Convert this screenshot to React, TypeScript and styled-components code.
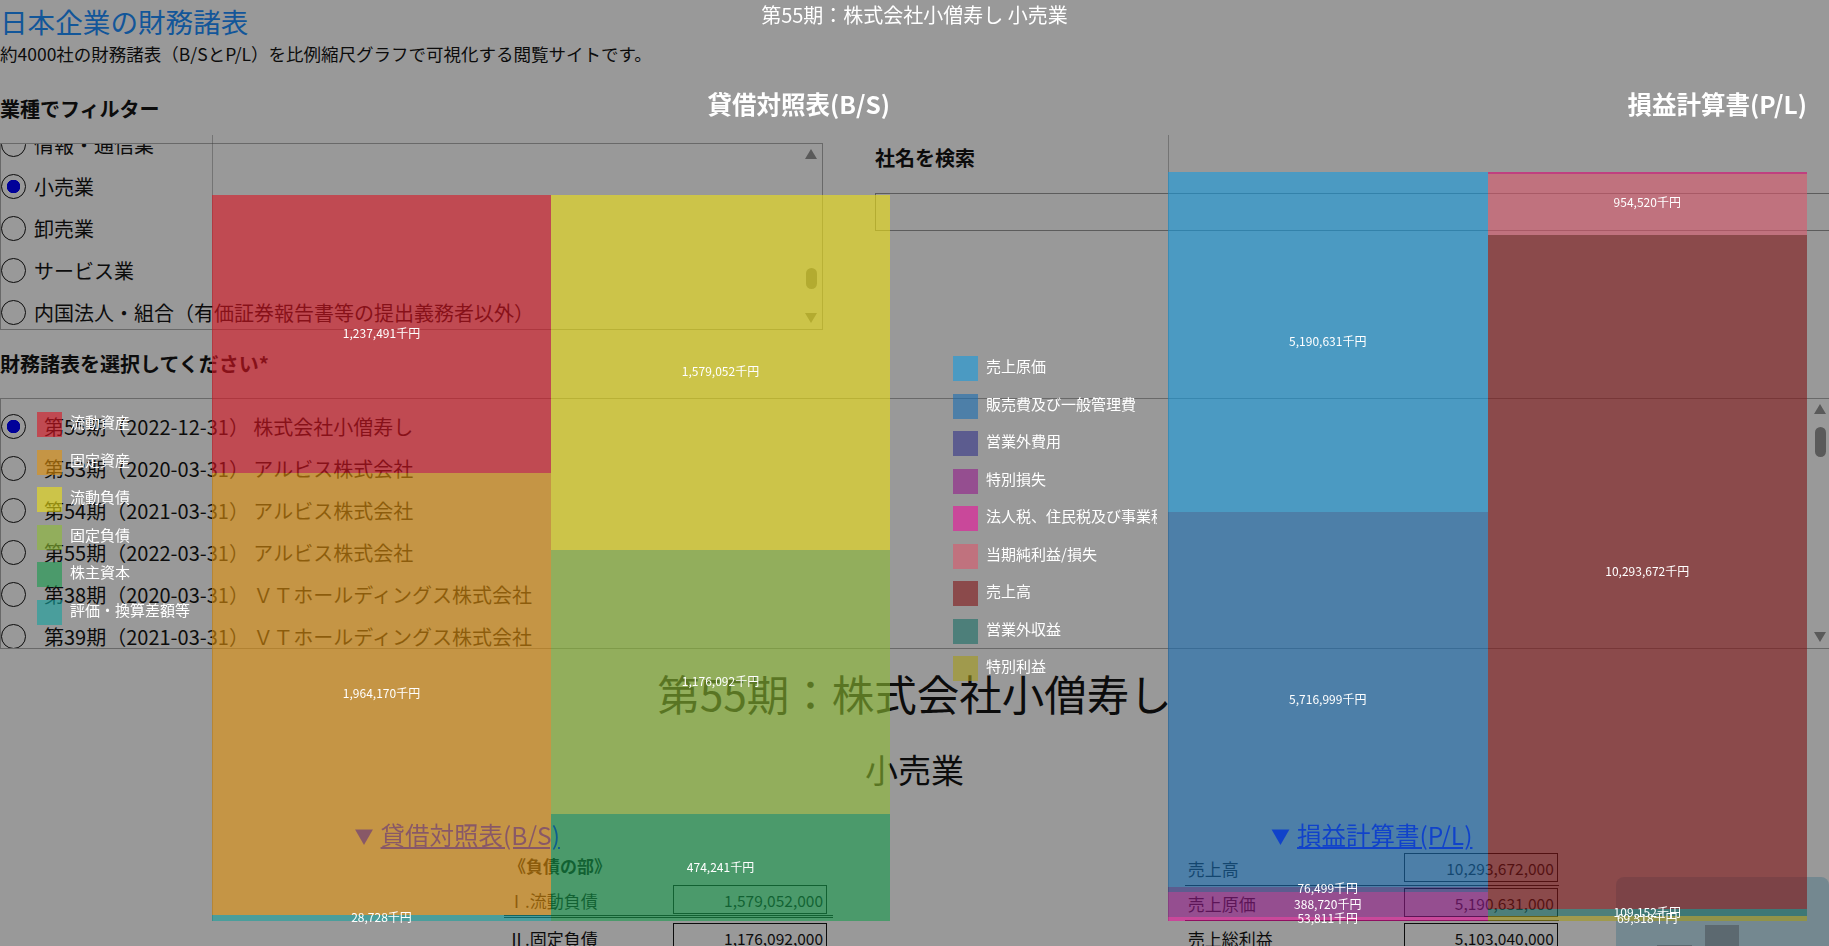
import styled, { createGlobalStyle } from "styled-components";

interface ISegment {
  value: number;
  color: string;
}

const BS_SCALE = 726 / 3229385;
const PL_SCALE = 749 / 11426662;

const COLORS = {
  currentAssets: "rgba(218, 21, 35, 0.6)",
  fixedAssets: "rgba(226, 146, 13, 0.6)",
  currentLiab: "rgba(238, 225, 20, 0.6)",
  fixedLiab: "rgba(141, 188, 51, 0.6)",
  capital: "rgba(23, 155, 76, 0.6)",
  valuation: "rgba(21, 161, 158, 0.6)",
  cost: "rgba(23, 155, 221, 0.6)",
  sga: "rgba(26, 110, 178, 0.6)",
  nonOpExpense: "rgba(51, 51, 136, 0.6)",
  specialLoss: "rgba(146, 28, 138, 0.6)",
  tax: "rgba(233, 18, 155, 0.6)",
  netIncome: "rgba(218, 88, 108, 0.6)",
  sales: "rgba(130, 21, 23, 0.6)",
  nonOpIncome: "rgba(26, 110, 101, 0.6)",
  specialIncome: "rgba(165, 155, 26, 0.6)",
};

const bsLeft: ISegment[] = [
  { value: 1237491, color: COLORS.currentAssets },
  { value: 1964170, color: COLORS.fixedAssets },
  { value: 28728, color: COLORS.valuation },
];
const bsRight: ISegment[] = [
  { value: 1579052, color: COLORS.currentLiab },
  { value: 1176092, color: COLORS.fixedLiab },
  { value: 474241, color: COLORS.capital },
];
const plLeft: ISegment[] = [
  { value: 5190631, color: COLORS.cost },
  { value: 5716999, color: COLORS.sga },
  { value: 76499, color: COLORS.nonOpExpense },
  { value: 388720, color: COLORS.specialLoss },
  { value: 53811, color: COLORS.tax },
];
const plRight: ISegment[] = [
  { value: 954520, color: COLORS.netIncome },
  { value: 10293672, color: COLORS.sales },
  { value: 109152, color: COLORS.nonOpIncome },
  { value: 69318, color: COLORS.specialIncome },
];

const bsLegend = [
  { name: "流動資産", color: COLORS.currentAssets },
  { name: "固定資産", color: COLORS.fixedAssets },
  { name: "流動負債", color: COLORS.currentLiab },
  { name: "固定負債", color: COLORS.fixedLiab },
  { name: "株主資本", color: COLORS.capital },
  { name: "評価・換算差額等", color: COLORS.valuation },
];
const plLegend = [
  { name: "売上原価", color: COLORS.cost },
  { name: "販売費及び一般管理費", color: COLORS.sga },
  { name: "営業外費用", color: COLORS.nonOpExpense },
  { name: "特別損失", color: COLORS.specialLoss },
  { name: "法人税、住民税及び事業税", color: COLORS.tax },
  { name: "当期純利益/損失", color: COLORS.netIncome },
  { name: "売上高", color: COLORS.sales },
  { name: "営業外収益", color: COLORS.nonOpIncome },
  { name: "特別利益", color: COLORS.specialIncome },
];

const industries = ["情報・通信業", "小売業", "卸売業", "サービス業", "内国法人・組合（有価証券報告書等の提出義務者以外）"];
const statements = [
  "第55期（2022-12-31） 株式会社小僧寿し",
  "第53期（2020-03-31） アルビス株式会社",
  "第54期（2021-03-31） アルビス株式会社",
  "第55期（2022-03-31） アルビス株式会社",
  "第38期（2020-03-31） ＶＴホールディングス株式会社",
  "第39期（2021-03-31） ＶＴホールディングス株式会社",
];

const formatLabel = (value: number) => `${value.toLocaleString("en-US")}千円`;

const BarColumn = ({ segments, scale }: { segments: ISegment[]; scale: number }) => (
  <Column>
    {segments.map((el) => (
      <Segment key={el.value} style={{ height: el.value * scale, background: el.color }}>
        <SegmentLabel>{formatLabel(el.value)}</SegmentLabel>
      </Segment>
    ))}
  </Column>
);

const Legend = ({ items }: { items: { name: string; color: string }[] }) => (
  <>
    {items.map((el) => (
      <LegendItem key={el.name}>
        <Swatch style={{ background: el.color }} />
        <LegendName>{el.name}</LegendName>
      </LegendItem>
    ))}
  </>
);

const Scrollbar = ({ thumbTop, thumbHeight, right }: { thumbTop: number; thumbHeight: number; right: number }) => (
  <ScrollTrack $right={right}>
    <ArrowUp />
    <Thumb $top={thumbTop} $height={thumbHeight} />
    <ArrowDown />
  </ScrollTrack>
);

const App = () => {
  return (
    <>
      <GlobalStyle />
      <Page>
        <Title>日本企業の財務諸表</Title>
        <Subtitle>約4000社の財務諸表（B/SとP/L）を比例縮尺グラフで可視化する閲覧サイトです。</Subtitle>

        <FilterRow>
          <FilterColumn>
            <FieldLabel>業種でフィルター</FieldLabel>
            <ListBox $height={187} $full={false}>
              <RadioList $offset={-21}>
                {industries.map((el) => (
                  <RadioRow key={el}>
                    <Radio $checked={el === "小売業"} />
                    <RadioText $gap={8}>{el}</RadioText>
                  </RadioRow>
                ))}
              </RadioList>
              <Scrollbar thumbTop={109} thumbHeight={21} right={5} />
            </ListBox>
          </FilterColumn>
          <SearchColumn>
            <FieldLabel>社名を検索</FieldLabel>
            <SearchInput />
          </SearchColumn>
        </FilterRow>

        <FieldLabel>財務諸表を選択してください*</FieldLabel>
        <ListBox $height={251} $full>
          <RadioList $offset={6}>
            {statements.map((el, i) => (
              <RadioRow key={el}>
                <Radio $checked={i === 0} />
                <RadioText $gap={18}>{el}</RadioText>
              </RadioRow>
            ))}
          </RadioList>
          <Scrollbar thumbTop={13} thumbHeight={30} right={3} />
        </ListBox>

        <CompanyName>第55期：株式会社小僧寿し</CompanyName>
        <IndustryName>小売業</IndustryName>

        <Sheets>
          <Sheet>
            <SheetLink>
              <Caret>▼</Caret>
              <a href="#bs">貸借対照表(B/S)</a>
            </SheetLink>
            <BalanceTable>
              <SectionName>《負債の部》</SectionName>
              <TableRow $width={329} $gap={5} $double>
                <RowName $pad={4}>Ⅰ.流動負債</RowName>
                <RowValue $left={169}>1,579,052,000</RowValue>
              </TableRow>
              <TableRow $width={329} $gap={5} $double>
                <RowName $pad={4}>Ⅱ.固定負債</RowName>
                <RowValue $left={169}>1,176,092,000</RowValue>
              </TableRow>
            </BalanceTable>
          </Sheet>
          <Sheet>
            <SheetLink>
              <Caret>▼</Caret>
              <a href="#pl">損益計算書(P/L)</a>
            </SheetLink>
            <IncomeTable>
              <TableRow $width={374} $gap={2} $double={false}>
                <RowName $pad={3}>売上高</RowName>
                <RowValue $left={219}>10,293,672,000</RowValue>
              </TableRow>
              <TableRow $width={374} $gap={2} $double={false}>
                <RowName $pad={3}>売上原価</RowName>
                <RowValue $left={219}>5,190,631,000</RowValue>
              </TableRow>
              <TableRow $width={374} $gap={2} $double={false}>
                <RowName $pad={3}>売上総利益</RowName>
                <RowValue $left={219}>5,103,040,000</RowValue>
              </TableRow>
            </IncomeTable>
          </Sheet>
        </Sheets>

        <StatusPanel>
          <svg width="212" height="69" viewBox="0 0 212 69">
            <rect x="89" y="48" width="34" height="21" fill="#9aafbb" />
            <rect x="41" y="68" width="35" height="1" fill="#9aafbb" />
          </svg>
        </StatusPanel>
      </Page>

      <Overlay />

      <ChartLayer>
        <ChartTitle>第55期：株式会社小僧寿し 小売業</ChartTitle>
        <Charts>
          <LegendColumn $left={37} $top={380} $width={212} $right={0}>
            <Legend items={bsLegend} />
          </LegendColumn>
          <PlotBlock $width={678}>
            <PlotHeading>貸借対照表(B/S)</PlotHeading>
            <Axis $top={60}>
              <BarColumn segments={bsLeft} scale={BS_SCALE} />
              <BarColumn segments={bsRight} scale={BS_SCALE} />
            </Axis>
          </PlotBlock>
          <LegendColumn $left={63} $top={324} $width={267} $right={11}>
            <Legend items={plLegend} />
          </LegendColumn>
          <PlotBlock $width={639}>
            <PlotHeading>損益計算書(P/L)</PlotHeading>
            <Axis $top={37}>
              <BarColumn segments={plLeft} scale={PL_SCALE} />
              <Column>
                <TopEdge />
                <BarColumn segments={plRight} scale={PL_SCALE} />
              </Column>
            </Axis>
          </PlotBlock>
        </Charts>
      </ChartLayer>
    </>
  );
};
export default App;

const FONT = `"Noto Sans CJK JP", "Noto Sans", sans-serif`;

const GlobalStyle = createGlobalStyle`
  html, body {
    margin: 0;
    padding: 0;
    background: #fff;
    overflow: hidden;
  }
  body {
    font-family: ${FONT};
    color: #141414;
  }
`;

const Page = styled.main`
  width: 1829px;
  height: 946px;
  overflow: hidden;
`;

const Title = styled.h1`
  margin: 0;
  font-size: 27.6px;
  font-weight: 400;
  line-height: 42px;
  height: 44px;
  color: #1e90ff;
`;

const Subtitle = styled.p`
  margin: 0;
  font-size: 17.5px;
  line-height: 20px;
  white-space: nowrap;
`;

const FilterRow = styled.div`
  display: flex;
  gap: 52px;
  margin-top: 30px;
  margin-bottom: 19px;
`;

const FilterColumn = styled.section`
  width: 823px;
  flex: none;
`;

const SearchColumn = styled.section`
  flex: 1;
  margin-top: 49px;
`;

const FieldLabel = styled.div`
  height: 30px;
  line-height: 30px;
  margin-bottom: 19px;
  font-size: 20px;
  font-weight: 700;
`;

const SearchInput = styled.div`
  height: 38px;
  margin-top: 20px;
  margin-right: -2px;
  border: 1px solid #9a9a9a;
  box-sizing: border-box;
`;

const ListBox = styled.div<{ $height: number; $full: boolean }>`
  position: relative;
  height: ${(p) => p.$height}px;
  box-sizing: border-box;
  border: 1px solid #b0b0b0;
  border-right-width: ${(p) => (p.$full ? 0 : 1)}px;
  overflow: hidden;
`;

const RadioList = styled.div<{ $offset: number }>`
  margin-top: ${(p) => p.$offset}px;
`;

const RadioRow = styled.label`
  display: flex;
  align-items: center;
  height: 42px;
  font-size: 20px;
`;

const Radio = styled.span<{ $checked: boolean }>`
  flex: none;
  width: 25px;
  height: 25px;
  box-sizing: border-box;
  border: 1.5px solid #141414;
  border-radius: 50%;
  background: ${(p) => (p.$checked ? "radial-gradient(circle, #0000ff 0 6.5px, #fff 7px)" : "#fff")};
`;

const RadioText = styled.span<{ $gap: number }>`
  margin-left: ${(p) => p.$gap}px;
  white-space: nowrap;
`;

const ScrollTrack = styled.div<{ $right: number }>`
  position: absolute;
  top: 0;
  bottom: 0;
  right: ${(p) => p.$right}px;
  width: 12px;
  padding: 5px 0 6px;
  box-sizing: border-box;
  display: flex;
  flex-direction: column;
  align-items: center;
`;

const ArrowUp = styled.div`
  width: 0;
  height: 0;
  border-left: 6px solid transparent;
  border-right: 6px solid transparent;
  border-bottom: 10px solid #969696;
`;

const ArrowDown = styled.div`
  width: 0;
  height: 0;
  margin-top: auto;
  border-left: 6px solid transparent;
  border-right: 6px solid transparent;
  border-top: 10px solid #969696;
`;

const Thumb = styled.div<{ $top: number; $height: number }>`
  width: 11px;
  height: ${(p) => p.$height}px;
  margin-top: ${(p) => p.$top}px;
  border-radius: 6px;
  background: #969696;
`;

const CompanyName = styled.h2`
  margin: 14px 0 0;
  font-size: 42.5px;
  font-weight: 400;
  line-height: 60px;
  text-align: center;
`;

const IndustryName = styled.h3`
  margin: 21px 0 0;
  font-size: 33px;
  font-weight: 400;
  line-height: 50px;
  text-align: center;
`;

const Sheets = styled.div`
  display: grid;
  grid-template-columns: 1fr 1fr;
  margin-top: 20px;
`;

const Sheet = styled.section`
  min-width: 0;
`;

const SheetLink = styled.div`
  position: relative;
  z-index: 1;
  height: 39px;
  line-height: 41px;
  font-size: 24.5px;
  text-align: center;
  color: #0000ee;

  a {
    color: inherit;
  }
`;

const Caret = styled.span`
  margin-right: 7px;
  font-size: 19px;
  vertical-align: 1px;
`;

const BalanceTable = styled.div`
  margin-top: 3px;
  margin-left: 504px;
`;

const IncomeTable = styled.div`
  width: 374px;
  margin: 0 auto;
`;

const SectionName = styled.div`
  height: 29px;
  padding-left: 5px;
  font-size: 17px;
  font-weight: 700;
  line-height: 20px;
`;

const TableRow = styled.div<{ $width: number; $gap: number; $double: boolean }>`
  display: flex;
  width: ${(p) => p.$width}px;
  height: 33px;
  margin-bottom: ${(p) => p.$gap}px;
  border-bottom: ${(p) => (p.$double ? "3px double #141414" : "1px solid #141414")};
  box-sizing: border-box;
`;

const RowName = styled.div<{ $pad: number }>`
  padding-left: ${(p) => p.$pad}px;
  height: 29px;
  line-height: 31px;
  font-size: 17px;
  white-space: nowrap;
`;

const RowValue = styled.div<{ $left: number }>`
  position: absolute;
  width: 154px;
  height: 29px;
  margin-left: ${(p) => p.$left}px;
  box-sizing: border-box;
  border: 1px solid #141414;
  padding-right: 3px;
  font-size: 15.5px;
  line-height: 29px;
  text-align: right;
`;

const StatusPanel = styled.aside`
  position: absolute;
  left: 1616px;
  top: 877px;
  width: 213px;
  height: 69px;
  border-radius: 8px 8px 0 0;
  background: #c2e3f0;

  svg {
    display: block;
  }
`;

const Overlay = styled.div`
  position: fixed;
  inset: 0;
  background: rgba(0, 0, 0, 0.4);
`;

const ChartLayer = styled.div`
  position: fixed;
  inset: 0;
  z-index: 2;
  color: #fff;
`;

const ChartTitle = styled.div`
  height: 32px;
  line-height: 29px;
  font-size: 20px;
  text-align: center;
`;

const Charts = styled.div`
  display: flex;
`;

const LegendColumn = styled.div<{ $left: number; $top: number; $width: number; $right: number }>`
  flex: none;
  width: ${(p) => p.$width}px;
  margin-right: ${(p) => p.$right}px;
  box-sizing: border-box;
  padding: ${(p) => p.$top}px 0 0 ${(p) => p.$left}px;
  overflow: hidden;
`;

const LegendItem = styled.div`
  display: flex;
  align-items: flex-start;
  height: 37.5px;
`;

const Swatch = styled.span`
  flex: none;
  width: 25px;
  height: 25px;
`;

const LegendName = styled.span`
  margin-left: 8px;
  font-size: 15px;
  line-height: 20px;
  white-space: nowrap;
`;

const PlotBlock = styled.div<{ $width: number }>`
  flex: none;
  width: ${(p) => p.$width}px;
  padding-top: 58px;
`;

const PlotHeading = styled.div`
  height: 30px;
  margin-bottom: 15px;
  font-size: 24.5px;
  font-weight: 700;
  line-height: 28px;
  text-align: right;
  white-space: nowrap;
`;

const Axis = styled.div<{ $top: number }>`
  display: flex;
  padding-top: ${(p) => p.$top}px;
  box-shadow: inset 1px 0 0 rgba(60, 60, 60, 0.4);
`;

const Column = styled.div`
  flex: 1;
  display: flex;
  flex-direction: column;
`;

const TopEdge = styled.div`
  height: 1.5px;
  margin-bottom: -1.5px;
  background: #c0407f;
  position: relative;
  z-index: 1;
`;

const Segment = styled.div`
  display: flex;
  align-items: center;
  justify-content: center;
  flex: none;
`;

const SegmentLabel = styled.span`
  position: relative;
  z-index: 2;
  padding-bottom: 2px;
  font-size: 12px;
  line-height: 14px;
  white-space: nowrap;
`;
